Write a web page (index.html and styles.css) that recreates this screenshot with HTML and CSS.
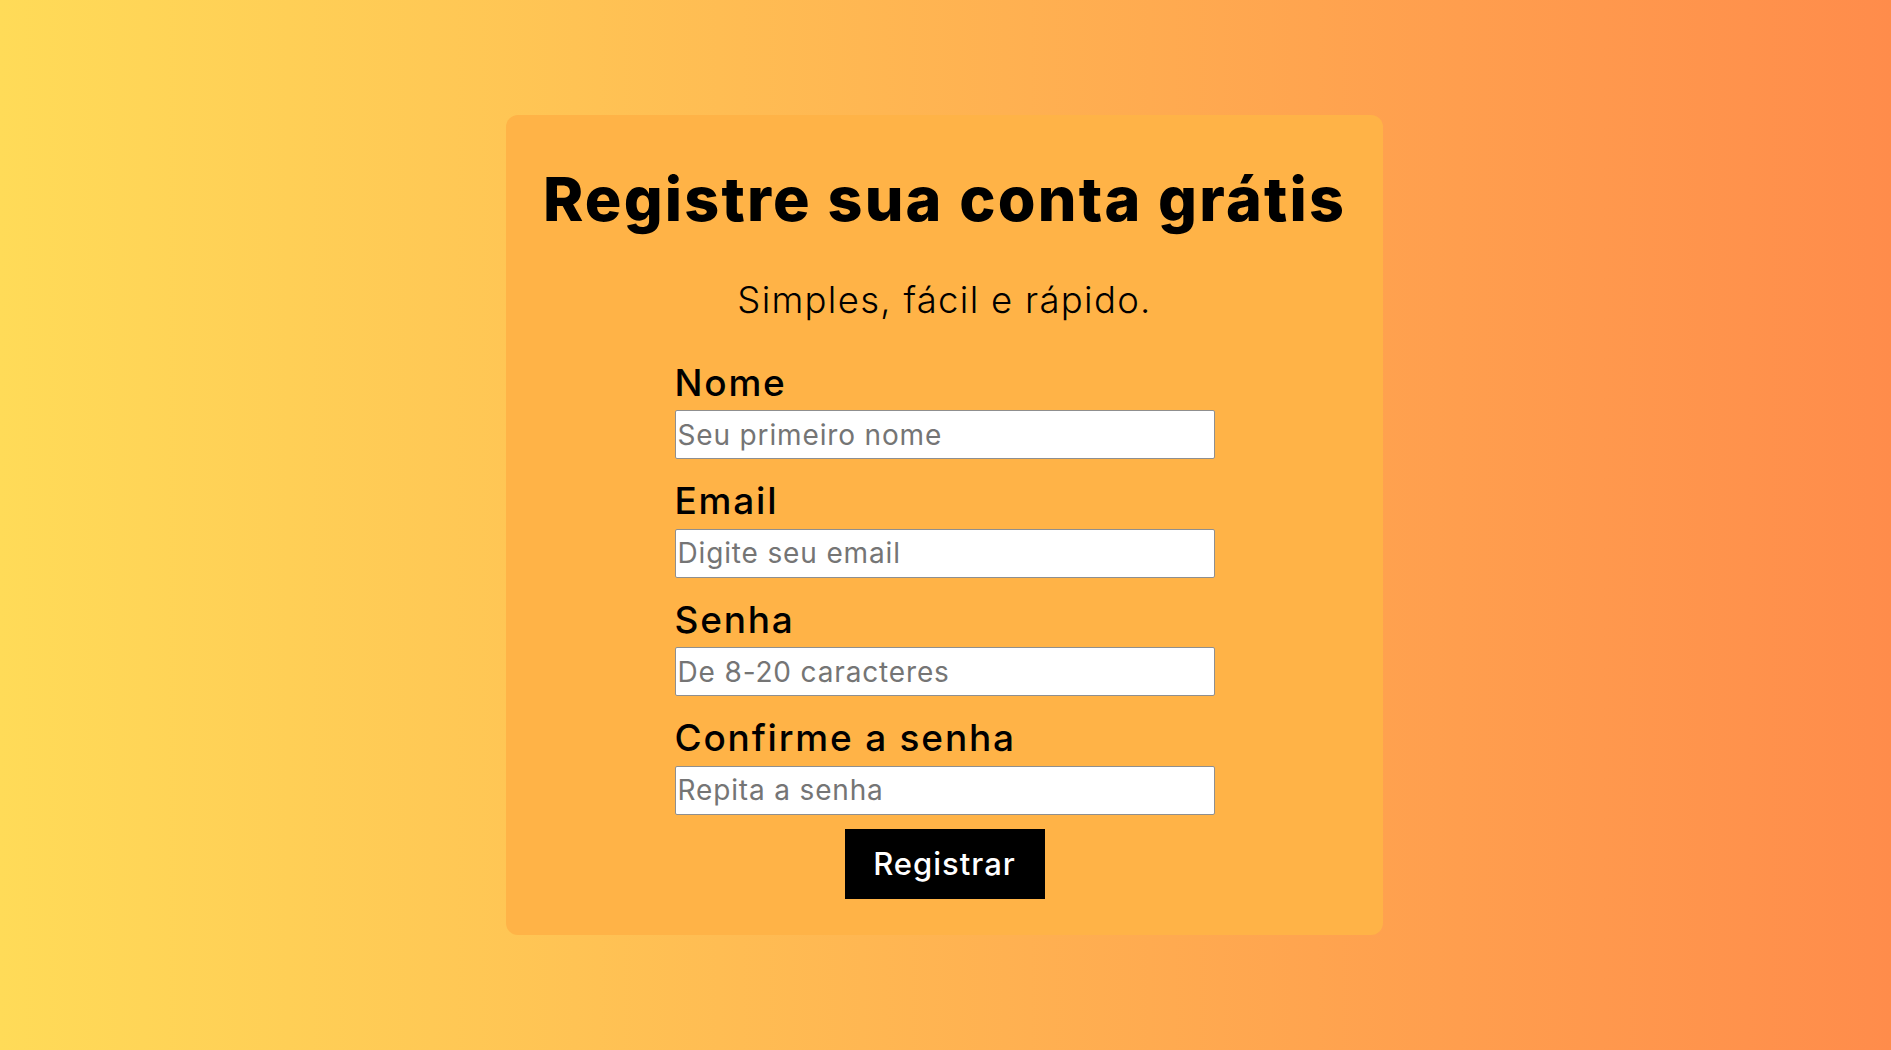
FILE: index.html
```html
<!DOCTYPE html>
<html lang="pt-BR">
<head>
<meta charset="utf-8">
<title>Registre sua conta grátis</title>
<link rel="stylesheet" href="styles.css">
</head>
<body>
<main class="page">
  <section class="card">
    <h1 class="title">Registre sua conta grátis</h1>
    <p class="subtitle">Simples, fácil e rápido.</p>
    <form class="form">
      <label class="label" for="nome">Nome</label>
      <input class="field" id="nome" type="text" placeholder="Seu primeiro nome">
      <label class="label" for="email">Email</label>
      <input class="field" id="email" type="email" placeholder="Digite seu email">
      <label class="label" for="senha">Senha</label>
      <input class="field" id="senha" type="password" placeholder="De 8-20 caracteres">
      <label class="label" for="confirma">Confirme a senha</label>
      <input class="field" id="confirma" type="password" placeholder="Repita a senha">
      <button class="btn" type="button">Registrar</button>
    </form>
  </section>
</main>
</body>
</html>
```
FILE: styles.css
```css
* { box-sizing: border-box; }
html, body { margin: 0; padding: 0; }
body {
  font-family: Inter, "Noto Sans", sans-serif;
  color: #000;
  background: linear-gradient(to right, #ffdb58, #ff8c4b);
  min-height: 100vh;
}
.page {
  height: 1050px;
  display: flex;
  align-items: center;
  justify-content: center;
  padding-right: 2px;
}
.card {
  width: 877px;
  background: #ffb347;
  border-radius: 12px;
  padding: 55px 0 36px;
  display: flex;
  flex-direction: column;
  align-items: center;
}
.title {
  margin: 0;
  font-size: 61px;
  line-height: 59px;
  font-weight: 800;
  letter-spacing: 2.2px;
}
.subtitle {
  margin: 53px 0 0;
  font-size: 36.5px;
  line-height: 36.5px;
  font-weight: 300;
  letter-spacing: 1.3px;
}
.form {
  width: 540px;
  margin-top: 47px;
  display: flex;
  flex-direction: column;
  align-items: flex-start;
}
.label {
  font-size: 37px;
  line-height: 34.4px;
  font-weight: 500;
  letter-spacing: 1.8px;
  margin: 25px 0 10px;
}
.label:first-child { margin-top: 0; }
.field {
  width: 540px;
  height: 49px;
  margin: 0;
  padding: 0 2px;
  border: 1px solid #8f8f8f;
  border-radius: 2px;
  background: #fff;
  font-family: inherit;
  font-size: 28px;
  letter-spacing: 0.85px;
  color: #000;
}
.field::placeholder { color: #757575; }
.btn {
  align-self: center;
  margin-top: 14px;
  width: 200px;
  height: 70px;
  border: none;
  background: #000;
  color: #fff;
  font-family: inherit;
  font-size: 31px;
  font-weight: 500;
  letter-spacing: 1px;
  cursor: pointer;
}
```
